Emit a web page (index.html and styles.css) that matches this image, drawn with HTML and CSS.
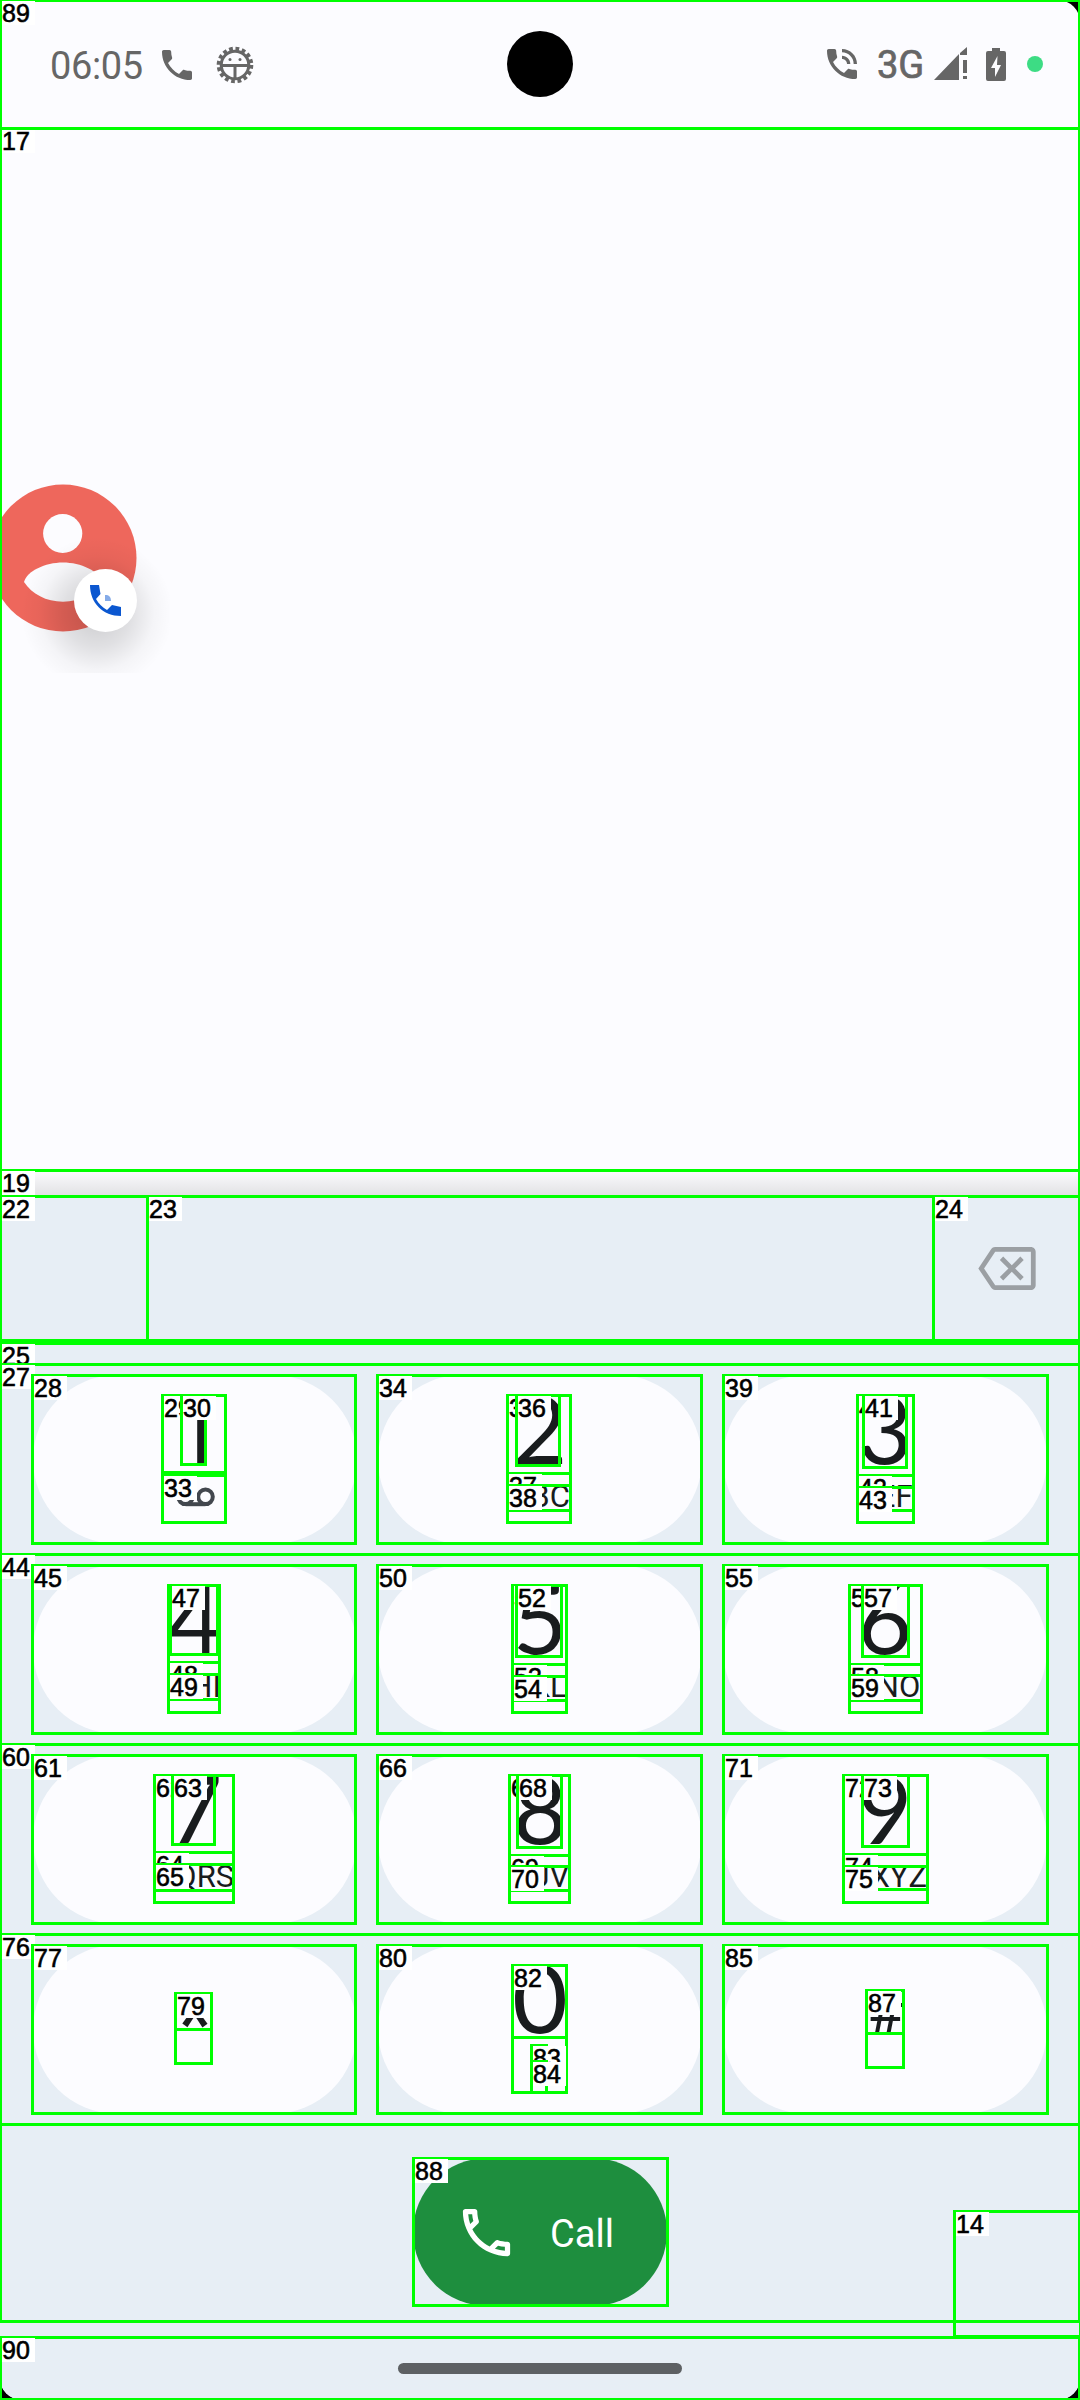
FILE: index.html
```html
<!DOCTYPE html>
<html lang="en">
<head>
<meta charset="utf-8">
<title>Phone</title>
<link rel="stylesheet" href="styles.css">
</head>
<body>
<div class="screen">
  <header class="status">
    <div class="status-side">
      <span class="time">06:05</span>
      <svg class="icon-40 call-status" viewBox="0 0 24 24"><path d="M6.620 10.790c1.440 2.830 3.760 5.140 6.590 6.590l2.200-2.200c.27-.27.67-.36 1.020-.24 1.120.37 2.330.57 3.570.57.55 0 1 .45 1 1V20c0 .55-.45 1-1 1-9.390 0-17-7.610-17-17 0-.55.45-1 1-1h3.500c.55 0 1 .45 1 1 0 1.250.2 2.450.57 3.570.11.35.03.74-.25 1.020l-2.200 2.200z"/></svg>
      <svg class="bug" viewBox="0 0 38 38"><circle cx="19" cy="19" r="16.300" fill="none" stroke="#666" stroke-width="4" stroke-dasharray="3.700 2.701"/><circle cx="19" cy="19" r="13.800" fill="none" stroke="#666" stroke-width="3"/><path d="M5 18h28v3H20.500v13h-3V21H5z"/><circle cx="14" cy="13.500" r="1.500"/><circle cx="24" cy="13.500" r="1.500"/></svg>
    </div>
    <span class="camera"></span>
    <div class="status-side status-right">
      <svg class="icon-40" viewBox="0 0 24 24"><path d="M20 15.500c-1.250 0-2.450-.2-3.570-.57-.1-.03-.21-.05-.31-.05-.26 0-.51.1-.71.29l-2.200 2.200c-2.830-1.440-5.150-3.750-6.590-6.590l2.200-2.210c.28-.26.36-.65.25-1C8.700 6.450 8.500 5.250 8.500 4c0-.55-.45-1-1-1H4c-.55 0-1 .45-1 1 0 9.390 7.610 17 17 17 .55 0 1-.45 1-1v-3.500c0-.55-.45-1-1-1zM19 12h2c0-4.970-4.030-9-9-9v2c3.870 0 7 3.130 7 7zm-4 0h2c0-2.760-2.240-5-5-5v2c1.660 0 3 1.340 3 3z"/></svg>
      <span class="network">3G</span>
      <svg class="signal" viewBox="0 0 34 34"><path d="M0 33L25 7v26zM26 6l7-6v8h-7zM29 13h4v13h-4zM29 29h4v3h-4z"/></svg>
      <svg class="battery" viewBox="0 0 20 33"><path d="M6 0h8v3h4q2 0 2 2v26q0 2-2 2H2q-2 0-2-2V5q0-2 2-2h4z"/><path fill="#fcfcff" d="M11.500 8L5 20h4v9l6-12h-4z"/></svg>
      <span class="privacy-dot"></span>
    </div>
  </header>

  <main class="content"></main>

  <section class="dialer">
    <div class="shade"></div>
    <div class="entry">
      <svg class="backspace" viewBox="0 3 24 18"><path d="M22 3H7c-.69 0-1.230.35-1.590.88L0 12l5.410 8.110c.36.53.9.89 1.590.89h15c1.100 0 2-.9 2-2V5c0-1.100-.9-2-2-2zm0 16H7.070L2.400 12l4.660-7H22v14zm-11.590-2L14 13.410 17.590 17 19 15.590 15.410 12 19 8.410 17.590 7 14 10.590 10.410 7 9 8.410 12.590 12 9 15.590z"/></svg>
    </div>
    <div class="keypad">
      <div class="key"><span class="digit one">1</span><svg class="voicemail" viewBox="0 0 39 20"><g fill="none" stroke="#42474e" stroke-width="4"><circle cx="9.500" cy="9.800" r="7.300"/><circle cx="29.500" cy="9.800" r="7.300"/><path d="M9.500 17.200h20"/></g></svg></div>
      <div class="key"><span class="digit">2</span><span class="letters">ABC</span></div>
      <div class="key"><span class="digit">3</span><span class="letters">DEF</span></div>
      <div class="key"><span class="digit">4</span><span class="letters">GHI</span></div>
      <div class="key"><span class="digit">5</span><span class="letters">JKL</span></div>
      <div class="key"><span class="digit">6</span><span class="letters">MNO</span></div>
      <div class="key"><span class="digit">7</span><span class="letters">PQRS</span></div>
      <div class="key"><span class="digit">8</span><span class="letters">TUV</span></div>
      <div class="key"><span class="digit">9</span><span class="letters">WXYZ</span></div>
      <div class="key"><span class="star">*</span></div>
      <div class="key"><span class="digit zero">0</span><span class="letters">+</span></div>
      <div class="key"><span class="pound">#</span></div>
    </div>
    <div class="call-row">
      <div class="call">
        <svg class="call-icon" viewBox="0 0 24 24"><path d="M6.540 5c.06.89.21 1.760.45 2.590l-1.200 1.200c-.41-1.200-.67-2.470-.76-3.790h1.510m9.860 12.020c.85.24 1.720.39 2.600.45v1.490c-1.320-.09-2.590-.35-3.800-.75l1.200-1.190M7.500 3H4c-.55 0-1 .45-1 1 0 9.390 7.610 17 17 17 .55 0 1-.45 1-1v-3.490c0-.55-.45-1-1-1-1.240 0-2.450-.2-3.570-.57-.1-.04-.21-.05-.31-.05-.26 0-.51.1-.71.29l-2.200 2.200c-2.830-1.450-5.150-3.760-6.590-6.590l2.200-2.200c.28-.28.36-.67.25-1.020C8.700 6.450 8.500 5.250 8.500 4c0-.55-.45-1-1-1z"/></svg>
        <span class="call-text">Call</span>
      </div>
    </div>
    <div class="nav"><span class="nav-handle"></span></div>
  </section>

  <svg class="bubble" viewBox="0 0 170 200">
    <defs><radialGradient id="glow"><stop offset="0" stop-color="#000" stop-opacity=".2"/><stop offset=".45" stop-color="#000" stop-opacity=".11"/><stop offset=".75" stop-color="#000" stop-opacity=".03"/><stop offset="1" stop-color="#000" stop-opacity="0"/></radialGradient></defs>
    <circle cx="63" cy="85" r="73.500" fill="#ee675c"/>
    <circle cx="62.700" cy="60.500" r="19.600" fill="#fcfcff"/>
    <path d="M24 109C27 98 45 89.500 63 89.500S99 98 102 109C94 121 80 128.700 63 128.700S32 121 24 109z" fill="#fcfcff"/>
    <ellipse cx="97" cy="140" rx="76" ry="76" fill="url(#glow)"/>
    <circle cx="105.500" cy="127.500" r="31.500" fill="#fff"/>
    <path d="M90 112h9l1.500 9-4.500 5c3 5 6 8 11 11l5-5 9 2v9C103 143 90 130 90 112z" fill="#0b57d0"/>
    <path d="M105 122h2q4 1 4 6h-6z" fill="#85abe8"/>
  </svg>
</div>
<svg class="inspector" viewBox="0 0 1080 2400"></svg>
<script src="inspector.js"></script>
</body>
</html>
```
FILE: styles.css
```css
* { box-sizing: border-box; }
body { margin: 0; background: #000; width: 1080px; height: 2400px; overflow: hidden; position: relative; font-family: Roboto, sans-serif; }
svg { display: block; flex: none; }
.screen { position: relative; width: 1080px; height: 2400px; overflow: hidden; border-radius: 22px; background: #fcfcff; display: flex; flex-direction: column; }

.status { height: 128px; display: grid; grid-template-columns: 1fr 66px 1fr; align-items: center; color: #666; fill: #666; }
.status-side { display: flex; align-items: center; padding-left: 50px; height: 66px; }
.time { font-size: 38px; line-height: 44px; width: 107px; padding-top: 4px; letter-spacing: -.4px; }
.icon-40 { width: 40px; height: 40px; }
.call-status { margin-top: 2px; }
.bug { width: 38px; height: 38px; margin-left: 19px; margin-top: 2px; }
.camera { width: 66px; height: 66px; border-radius: 50%; background: #000; }
.status-right { padding: 0 37px 0 0; justify-content: flex-end; }
.network { font-size: 38px; line-height: 44px; -webkit-text-stroke: .7px #666; width: 57px; margin-left: 15px; padding-top: 2px; }
.signal { width: 34px; height: 34px; }
.battery { width: 20px; height: 33px; margin-left: 18px; }
.privacy-dot { width: 16px; height: 16px; border-radius: 50%; background: #3ddc84; margin-left: 21px; }

.content { height: 1042px; }
.shade { height: 27px; background: linear-gradient(#fcfcff, #e0e0e2); }
.dialer { flex: 1; background: #e7eef5; display: flex; flex-direction: column; }
.entry { height: 144px; display: flex; align-items: center; justify-content: flex-end; padding: 0 44px 2px 0; fill: #9b9fa3; }
.backspace { width: 58px; height: 43px; }
.keypad { margin-top: 34px; padding: 0 33px; display: grid; grid-template-columns: repeat(3, 1fr); grid-auto-rows: 169px; gap: 21px; }
.key { background: #fcfcff; border-radius: 85px; padding-top: 14px; display: flex; flex-direction: column; align-items: center; color: #191c1e; }
.digit { font-family: Lato, sans-serif; font-size: 94px; line-height: 78px; }
.one, .zero { font-family: Inter, sans-serif; font-size: 92px; line-height: 81px; margin-bottom: -3px; }
.zero { transform: scaleX(1.06); }
.letters { margin-top: 15px; font-size: 31px; line-height: 30px; }
.voicemail { width: 39px; height: 20px; margin-top: 20px; }
.star { font-size: 84px; line-height: 90px; margin-top: 20px; }
.pound { font-size: 58px; line-height: 60px; margin-top: 23px; }
.call-row { margin-top: 44px; display: flex; justify-content: center; }
.call { width: 254px; height: 148px; border-radius: 74px; background: #1e8e3e; color: #fff; fill: #fff; display: flex; align-items: center; padding-left: 42px; gap: 32px; font-size: 38px; }
.call-icon { width: 63px; height: 63px; }
.call-text { padding-top: 3px; }
.nav { margin-top: auto; height: 63px; padding-top: 26px; display: flex; justify-content: center; }
.nav-handle { width: 284px; height: 11px; border-radius: 6px; background: #5d6063; }

.bubble { position: absolute; left: 0; top: 473px; width: 170px; height: 200px; }
.inspector { position: absolute; left: 0; top: 0; width: 1080px; height: 2400px; }
.outline { fill: none; stroke: #0f0; stroke-width: 3px; shape-rendering: crispEdges; }
.tag { fill: #fff; shape-rendering: crispEdges; }
.tag-text { font: 25px "Liberation Sans", sans-serif; fill: #000; stroke: #000; stroke-width: .6px; }
```
FILE: inspector.js
```js
// Element bounds: [number, left, top, right, bottom]; a number of 0 leaves the tag out.
const bounds = [
  [14, 954, 2211, 1080, 2336],
  [17, 0, 128, 1079, 1170],
  [19, 0, 1170, 1079, 2321],
  [22, 0, 1196, 147, 1340],
  [23, 147, 1196, 933, 1340],
  [24, 933, 1196, 1079, 1340],
  [25, 0, 1343, 1079, 2321],
  [27, 0, 1364, 1079, 1554],
  [28, 32, 1375, 355, 1543],
  [29, 162, 1395, 225, 1472], [0, 162, 1474, 225, 1522], [30, 181, 1395, 205, 1464], [33, 162, 1475, 225, 1522],
  [34, 377, 1375, 701, 1543],
  [35, 507, 1395, 570, 1522], [36, 516, 1395, 559, 1465], [37, 507, 1473, 570, 1522], [38, 507, 1485, 570, 1510],
  [39, 723, 1375, 1047, 1543],
  [40, 857, 1395, 913, 1522], [41, 863, 1395, 906, 1467], [42, 857, 1475, 913, 1522], [43, 857, 1487, 913, 1510],
  [44, 0, 1554, 1079, 1744],
  [45, 32, 1565, 355, 1733],
  [46, 168, 1585, 219, 1712], [47, 170, 1585, 217, 1654], [48, 168, 1662, 219, 1712], [49, 168, 1674, 219, 1699],
  [50, 377, 1565, 701, 1733],
  [51, 512, 1585, 566, 1712], [52, 516, 1585, 561, 1656], [53, 512, 1664, 566, 1712], [54, 512, 1676, 566, 1700],
  [55, 723, 1565, 1047, 1733],
  [56, 849, 1585, 921, 1712], [57, 862, 1585, 908, 1656], [58, 849, 1664, 921, 1712], [59, 849, 1675, 921, 1700],
  [60, 0, 1744, 1079, 1934],
  [61, 32, 1755, 355, 1923],
  [62, 154, 1775, 233, 1902], [63, 172, 1775, 214, 1844], [64, 154, 1852, 233, 1902], [65, 154, 1864, 233, 1890],
  [66, 377, 1755, 701, 1923],
  [67, 509, 1775, 569, 1902], [68, 517, 1775, 561, 1847], [69, 509, 1855, 569, 1902], [70, 509, 1866, 569, 1890],
  [71, 723, 1755, 1047, 1923],
  [72, 843, 1775, 927, 1902], [73, 862, 1775, 908, 1846], [74, 843, 1854, 927, 1902], [75, 843, 1866, 927, 1889],
  [76, 0, 1934, 1079, 2124],
  [77, 32, 1945, 355, 2113],
  [0, 175, 1993, 211, 2063], [79, 175, 1993, 211, 2029],
  [80, 377, 1945, 701, 2113],
  [0, 512, 1965, 566, 2092], [82, 512, 1965, 566, 2037], [83, 531, 2045, 546, 2092], [84, 531, 2061, 546, 2092],
  [85, 723, 1945, 1047, 2113],
  [0, 866, 1990, 903, 2067], [87, 866, 1990, 903, 2033],
  [88, 413, 2158, 667, 2305],
  [89, 0, 0, 1079, 128],
  [90, 0, 2337, 1079, 2399]
];

const layer = document.querySelector(".inspector");

function add(name, className, attributes) {
  const node = document.createElementNS("http://www.w3.org/2000/svg", name);
  node.setAttribute("class", className);
  for (const key in attributes) node.setAttribute(key, attributes[key]);
  layer.appendChild(node);
  return node;
}

for (const [number, left, top, right, bottom] of bounds) {
  add("rect", "outline", { x: left + 0.5, y: top + 0.5, width: right - left, height: bottom - top });
  if (!number) continue;
  add("rect", "tag", { x: left + 2, y: top + 1, width: 33, height: 24 });
  add("text", "tag-text", { x: left + 2, y: top + 22 }).textContent = number;
}
```
